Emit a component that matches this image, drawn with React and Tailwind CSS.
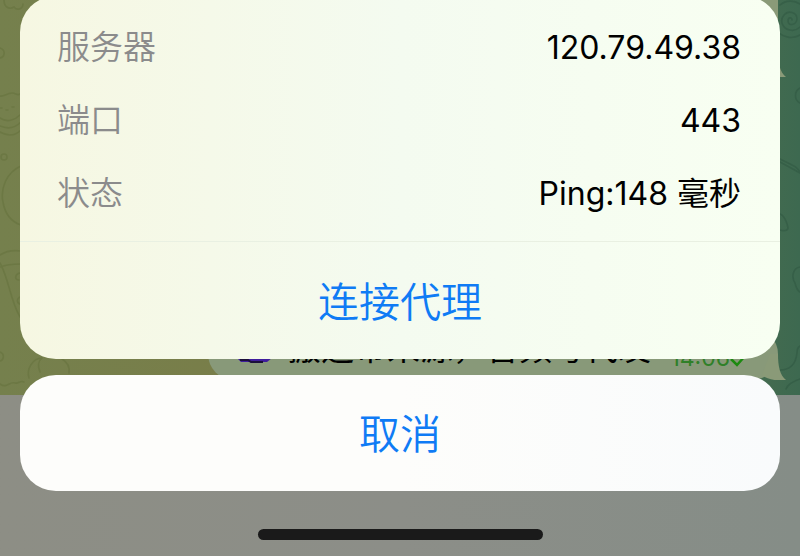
import React from 'react';

const details = [
    { label: '服务器', value: '120.79.49.38' },
    { label: '端口', value: '443' },
    { label: '状态', value: 'Ping:148 毫秒' },
];

const Doodles = () => (
    <>
        <svg className="absolute top-0 left-0 w-[210px] h-[395px]" viewBox="0 0 210 395" fill="none" stroke="#5f6b38" strokeOpacity="0.4" strokeWidth="1.6" strokeLinecap="round">
            <path d="M4 0c0 7 5 10 10 7 3 4 9 2 9-3M0 48c6 2 5 9 0 10" />
            <path d="M0 96c4 1 7-3 12-3 4 0 5 3 8 1M0 108h2M6 110h2M12 107h2M0 118c7 5 15 2 20-3M0 126c9 4 16 1 21-4M0 132c9 5 16 3 21-2" />
            <circle cx="4" cy="157" r="3" />
            <path d="M21 166c-14 6-21 22-18 36 2 12 9 20 18 23" />
            <path d="M0 255c6-4 14-5 21-4M0 267c7-3 14-3 21-3M0 263c9 16 10 37 20 54M20 273c-5 1-6 7-1 7M20 297c-4 2-3 7 1 7" />
            <path d="M0 352c5 2 4 8 0 9M0 384c7 5 9-3 15-1 4 1 5-3 9-1" />
            <path d="M29 378c-3-9 4-20 13-20M42 358c-5 4-4 9-2 14M62 359c5 3 8 8 7 14" />
        </svg>
        <svg className="absolute top-0 right-0 w-[28px] h-[395px]" viewBox="0 0 28 395" fill="none" stroke="#2d5540" strokeOpacity="0.5" strokeWidth="1.6" strokeLinecap="round">
            <path d="M20 20c0-3-4-3-4 1 0 5 8 5 9-2 0-7-9-9-13-4-5 6-1 14 6 15 4 1 7 0 10-3M7 33c6 5 14 6 21 2M8 5c6-5 14-5 20-1" />
            <path d="M28 88c-6 3-6 12 0 15M8 159l12 6c3 1 6 4 8 7M8 162l11 6 9 5" />
            <path d="M8 214c4 1 7 8 8 14 0 3-5 3-8 2M28 267c-7 1-9 10-5 16 1 4 3 8 5 9" />
            <path d="M8 370c12 0 16-8 17-17 0-4 1-6 3-7M14 389c2-5 8-8 14-10" />
        </svg>
    </>
);

const BubbleTail = () => (
    <svg className="absolute -right-2 bottom-0 w-7 h-[26px]" viewBox="0 0 28 26" fill="#8a9a78">
        <path d="M4 21c6 5 15 6 24 5-6-5-8-13-8-26h-8z" />
    </svg>
);

const ChatBackdrop = () => (
    <div className="absolute inset-0 flex flex-col" aria-hidden="true">
        <div className="relative h-[395px] flex flex-col justify-between items-end pr-[22px] pb-[15px] overflow-hidden bg-linear-to-r from-[#75804d] via-[#7b7c46] to-[#3d6950]">
            <Doodles />
            <div className="relative w-[570px] h-[77px] bg-[#8a9a78] rounded-br-[32px]">
                <BubbleTail />
            </div>
            <div className="relative w-[570px] rounded-[32px] bg-[#889979] pl-7 pr-8 pb-3 flex items-end text-black">
                <svg className="w-9 h-9 mr-4 mb-1" viewBox="0 0 36 36" fill="none">
                    <path d="M0 10h36v20l-5 4H5l-4-4z" fill="#3f1d9c" />
                    <path d="M0 29h20" stroke="#c0204f" strokeWidth="2" />
                    <path d="M4 32h8l3 2h12" stroke="#1b0f3a" strokeWidth="2" />
                </svg>
                <span className="text-[33px] leading-10 whitespace-nowrap">搬运带来源，音频写代发</span>
                <span className="ml-auto flex items-end text-[23px] leading-5 text-[#2f8028]">
                    14:06
                    <svg className="w-4 h-5" viewBox="0 0 16 20" fill="none" stroke="#1c8a10" strokeWidth="2.5">
                        <path d="M1 11l6 6 8-9" />
                    </svg>
                </span>
                <BubbleTail />
            </div>
        </div>
        <div className="flex-1 bg-linear-to-r from-[#8d8e85] via-[#8c8e88] to-[#858d87]"></div>
    </div>
);

const App = () => {
    return (
        <div className="relative min-h-screen overflow-hidden font-['Inter','Noto_Sans_CJK_SC',sans-serif]">
            <ChatBackdrop />
            <main className="relative min-h-screen px-5 pb-4 flex flex-col gap-4">
                <section className="-mt-1 rounded-[36px] overflow-hidden bg-linear-to-r from-[#f6f7e2] via-[#f4fbf0] to-[#f8fff2]">
                    <dl className="pt-[15px] pb-[11px] pl-[37px] pr-[39px]">
                        {details.map(({ label, value }) => (
                            <div key={label} className="h-[73px] flex items-center justify-between">
                                <dt className="text-[33px] text-[#8b8b8c] font-[350]">{label}</dt>
                                <dd className="text-[32px] text-black">{value}</dd>
                            </div>
                        ))}
                    </dl>
                    <button type="button" className="w-full h-[118px] pt-1 border-t border-[#e9f0e2] text-[41px] text-[#0f7bf5] font-[350]">
                        连接代理
                    </button>
                </section>
                <button type="button" className="w-full h-[116px] pt-1 rounded-[36px] bg-linear-to-r from-[#fdfdfb] via-[#fdfdfb] to-[#f9fbfc] text-[41px] text-[#0f7bf5] font-[350]">
                    取消
                </button>
                <div className="mt-auto mx-auto w-[285px] h-[11px] rounded-full bg-[#1a1a1a]"></div>
            </main>
        </div>
    );
};

export default App;
